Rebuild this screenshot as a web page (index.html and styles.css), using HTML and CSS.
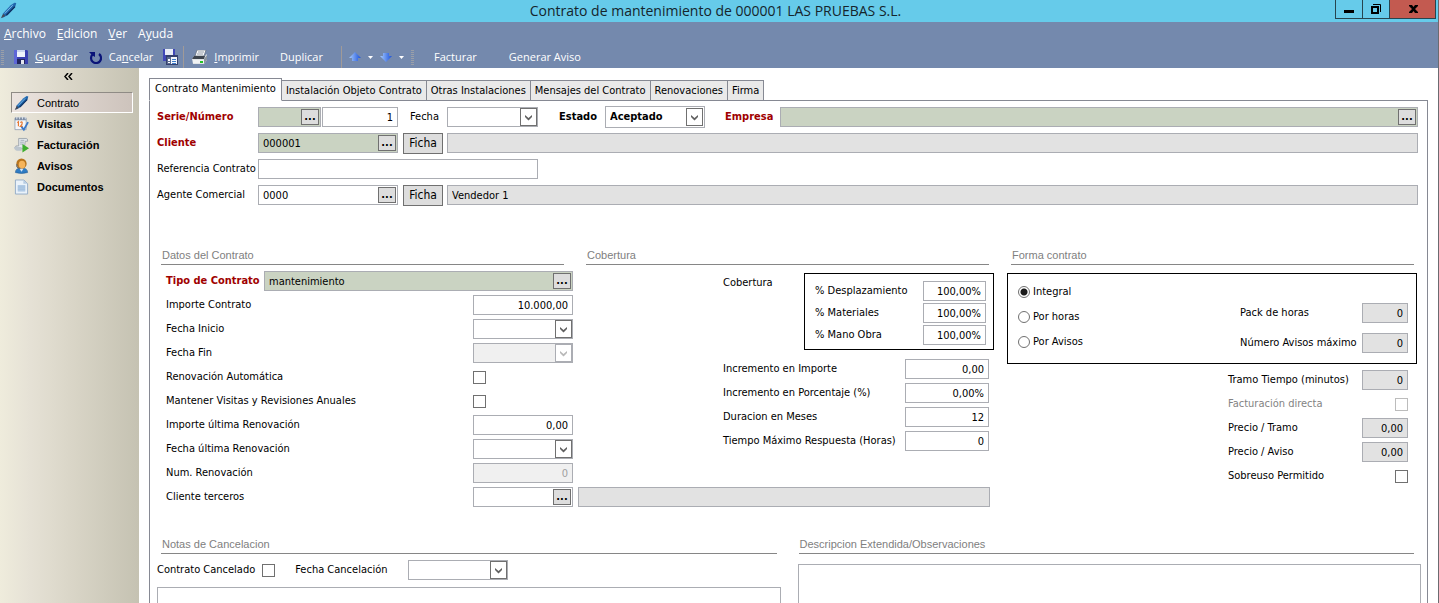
FILE: index.html
```html
<!DOCTYPE html>
<html lang="es">
<head>
<meta charset="utf-8">
<title>Contrato de mantenimiento</title>
<link rel="stylesheet" href="styles.css">
</head>
<body>
<svg class="defs" width="0" height="0" aria-hidden="true">
  <defs>
    <linearGradient id="pen-ink" x1="0" y1="0" x2="1" y2="1">
      <stop offset="0" stop-color="#5aa4e0"/><stop offset=".5" stop-color="#1f66ac"/><stop offset="1" stop-color="#0b2c5c"/>
    </linearGradient>
    <linearGradient id="arrow-blue" x1="0" y1="0" x2="1" y2="0">
      <stop offset="0" stop-color="#a8ccff"/><stop offset="1" stop-color="#1a50d8"/>
    </linearGradient>
    <symbol id="pen" viewBox="0 0 16 16">
      <path d="M1.500 14.800 3 10.500 10 3 13.500.6l1.800.4-1 3.500L7.500 12l-4 2.300z" fill="url(#pen-ink)"/>
      <path d="M.8 15.400 3 11l2 2.200z" fill="#4a4a55"/>
      <path d="M4.500 10.800 12 3" stroke="#8cc4f0" stroke-width=".8"/>
      <path d="M6 12.500 14 4.500" stroke="#0f2f60" stroke-width="1.200"/>
    </symbol>
    <symbol id="chevron" viewBox="0 0 9 7">
      <path d="M1 1v2l3.500 3.500L8 3V1L4.500 4z" fill="currentColor"/>
    </symbol>
  </defs>
</svg>

<header class="titlebar">
  <svg class="titlebar-icon"><use href="#pen"/></svg>
  <h1 class="title">Contrato de mantenimiento de 000001 LAS PRUEBAS S.L.</h1>
  <div class="window-buttons">
    <button class="win-btn" aria-label="Minimizar"><svg width="12" height="12"><path d="M1 7h10v3H1z"/></svg></button>
    <button class="win-btn" aria-label="Restaurar"><svg width="12" height="12"><path d="M1 3h8v8H1zM3 5v4h4V5z" fill-rule="evenodd"/><path d="M3 1.500h7.500V9" fill="none" stroke="#000"/></svg></button>
    <button class="win-btn close" aria-label="Cerrar"><svg width="12" height="12"><path d="M2 2h3l1.500 2L8 2h3v1L8 6l3 3v1H8L6.500 8 5 10H2V9l3-3-3-3z"/></svg></button>
  </div>
</header>

<nav class="menubar">
  <button><u>A</u>rchivo</button>
  <button><u>E</u>dicion</button>
  <button><u>V</u>er</button>
  <button>A<u>y</u>uda</button>
</nav>

<div class="toolbar">
  <span class="grip"></span>
  <button class="tool tool-save">
    <svg width="14" height="14"><path d="M0 0h13l1 1v13H0z" fill="#3a3fb0"/><path d="M0 0h3v14H0z" fill="#5d66d8"/><path d="M3 0h8v7H3z" fill="#eef2fb"/><path d="M3 0h8v2H3z" fill="#c9d4ee"/><path d="M3 9h8v5H3z" fill="#23265e"/><path d="M7 10h3v4H7z" fill="#e4e6ee"/></svg>
    <span><u>G</u>uardar</span>
  </button>
  <button class="tool tool-cancel">
    <svg width="13" height="13"><path d="M3.500 3.500A5 5 0 1 0 10 3" fill="none" stroke="#0a1478" stroke-width="2.200"/><path d="M0 1h6v5L3.500 4.500z" fill="#0a1478"/></svg>
    <span>Ca<u>n</u>celar</span>
  </button>
  <button class="tool tool-list" aria-label="Guardar y cerrar">
    <svg width="16" height="16"><path d="M1 0h12v12H1z" fill="#4048b8"/><path d="M3 0h8v6H3z" fill="#e8edf8"/><path d="M4 6h12v10H4z" fill="#34406e"/><path d="M5 8h10v7H5z" fill="#f4f7fc"/><path d="M5 8h4v7H5z" fill="#5a6a92"/><path d="M6 10h2v2H6zM6 13h2v1H6z" fill="#fff"/><path d="M10 10h4M10 12h4M10 14h4" stroke="#3d7ac8" shape-rendering="crispEdges"/></svg>
  </button>
  <span class="divider"></span>
  <button class="tool tool-print">
    <svg width="16" height="14"><path d="M5 0h9l-2 6H3z" fill="#f7f9fb" stroke="#5f6a78" stroke-width=".7"/><path d="M6 2h6M5 4h6" stroke="#7b8796" stroke-width=".8"/><path d="M2 6h11l2-2v6l-3 4H1L0 9z" fill="#dfe3e6"/><path d="M2 6h11l-1 3H0z" fill="#3c444e"/><path d="M1 10h11v3H1z" fill="#f0f2f3"/><path d="M12 9l3-4v5l-3 4z" fill="#8a949f"/><path d="M8 11h3v2H8z" fill="#24c324"/></svg>
    <span><u>I</u>mprimir</span>
  </button>
  <button class="tool tool-copy">Duplicar</button>
  <span class="divider"></span>
  <button class="tool tool-arrow" aria-label="Anterior">
    <svg width="12" height="10"><path d="M6 0l6 6H9v3H3V6H0z" fill="url(#arrow-blue)"/></svg>
    <svg width="5" height="3"><path d="M0 0h5L2.500 3z" fill="#fff"/></svg>
  </button>
  <button class="tool tool-arrow" aria-label="Siguiente">
    <svg width="12" height="10"><path d="M6 10L0 4h3V1h6v3h3z" fill="url(#arrow-blue)"/></svg>
    <svg width="5" height="3"><path d="M0 0h5L2.500 3z" fill="#fff"/></svg>
  </button>
  <span class="grip"></span>
  <button class="tool tool-invoice">Facturar</button>
  <button class="tool tool-notice">Generar Aviso</button>
</div>

<div class="workspace">
  <aside class="sidebar">
    <button class="collapse" aria-label="Contraer"><svg width="9" height="7"><path d="M4 0L1 3.500 4 7M8 0L5 3.500 8 7" fill="none" stroke="#000" stroke-width="1.500"/></svg></button>
    <nav class="side-nav">
      <a href="#" class="side-link current"><svg><use href="#pen"/></svg>Contrato</a>
      <a href="#" class="side-link"><svg viewBox="0 0 16 16"><path d="M1 2h12v12H1z" fill="#f4f6fa" stroke="#8a98ae" stroke-width=".8"/><path d="M1 1h12v3H1z" fill="#7c8ca4"/><path d="M3 0v3M6 0v3M9 0v3M12 0v3" stroke="#dfe5ee"/><path d="M3.500 6.500l1.200-1v5M6.800 6.500q1.600-1.500 2 0T6.800 10.500h2.500" fill="none" stroke="#e8762c" stroke-width="1.200"/><path d="M8 11l2.500 3L15 6" fill="none" stroke="#3c78c8" stroke-width="2"/></svg>Visitas</a>
      <a href="#" class="side-link"><svg viewBox="0 0 16 16"><path d="M5 1h8q2 0 1.500 3H12l-1 8H3q-2-1-1-3h3z" fill="#e3e8ec" stroke="#8d97a2" stroke-width=".8"/><path d="M7 3h4M6.500 5h4M6.500 7h4" stroke="#a4afba"/><path d="M0 10h8v4H3q-3-1-3-4z" fill="#bcc5cd"/><path d="M9 7l7 4.500L9 16z" fill="#3fae2f"/></svg>Facturación</a>
      <a href="#" class="side-link"><svg viewBox="0 0 16 16"><path d="M1.500 15q0-5 6.500-5t6.500 5q-6.500 2-13 0z" fill="#2f7cc4" stroke="#1b5590" stroke-width=".6"/><ellipse cx="8" cy="5.500" rx="5.500" ry="5.500" fill="#b8741c"/><ellipse cx="8.500" cy="6.500" rx="3.500" ry="4.200" fill="#f6b45a"/><path d="M3 6v3q2 2 4 1.500" fill="none" stroke="#58606c"/><path d="M6 11h4l-2 3z" fill="#d8e8f6"/></svg>Avisos</a>
      <a href="#" class="side-link"><svg viewBox="0 0 16 16"><path d="M1.500.500h9l4 4v11h-13z" fill="#eaf2fa" stroke="#93abc6"/><path d="M10 .500v4h4z" fill="#b5cbe2"/><path d="M4 6h8v7H4z" fill="#b9d0e8"/><path d="M4 7h8M4 9h8M4 11h8" stroke="#9dbbdc"/></svg>Documentos</a>
    </nav>
  </aside>

  <main class="content">
    <div class="tabs" role="tablist">
      <button role="tab" class="tab active" aria-selected="true">Contrato Mantenimiento</button>
      <button role="tab" class="tab">Instalación Objeto Contrato</button>
      <button role="tab" class="tab">Otras Instalaciones</button>
      <button role="tab" class="tab">Mensajes del Contrato</button>
      <button role="tab" class="tab">Renovaciones</button>
      <button role="tab" class="tab">Firma</button>
    </div>

    <form class="panel">
      <div class="head">
        <div class="head-row">
          <label class="head-label required" for="serie">Serie/Número</label>
          <div class="field key serie"><input id="serie" type="text"><button type="button" class="more" aria-label="Buscar serie">...</button></div>
          <div class="field numero"><input class="num" type="text" value="1" aria-label="Número"></div>
          <label class="fecha-label" for="fecha">Fecha</label>
          <div class="field fecha"><input id="fecha" type="text"><button type="button" class="drop" aria-label="Abrir calendario"><svg><use href="#chevron"/></svg></button></div>
          <label class="estado-label" for="estado">Estado</label>
          <div class="field estado"><select id="estado"><option>Aceptado</option></select><span class="drop"><svg><use href="#chevron"/></svg></span></div>
          <label class="empresa-label required" for="empresa">Empresa</label>
          <div class="field key grow"><input id="empresa" type="text"><button type="button" class="more" aria-label="Buscar empresa">...</button></div>
        </div>
        <div class="head-row">
          <label class="head-label required" for="cliente">Cliente</label>
          <div class="field key code"><input id="cliente" type="text" value="000001"><button type="button" class="more" aria-label="Buscar cliente">...</button></div>
          <button type="button" class="ficha">Ficha</button>
          <div class="field locked grow"><input type="text" readonly aria-label="Nombre del cliente"></div>
        </div>
        <div class="head-row">
          <label class="head-label" for="referencia">Referencia Contrato</label>
          <div class="field referencia"><input id="referencia" type="text"></div>
        </div>
        <div class="head-row">
          <label class="head-label" for="agente">Agente Comercial</label>
          <div class="field code"><input id="agente" type="text" value="0000"><button type="button" class="more" aria-label="Buscar agente">...</button></div>
          <button type="button" class="ficha">Ficha</button>
          <div class="field locked grow"><input type="text" value="Vendedor 1" readonly aria-label="Nombre del agente"></div>
        </div>
      </div>

      <div class="sections">
        <section class="section datos">
          <h2 class="heading">Datos del Contrato</h2>
          <div class="row"><label class="required tipo-label" for="tipo">Tipo de Contrato</label><div class="field key grow"><input id="tipo" type="text" value="mantenimiento"><button type="button" class="more" aria-label="Buscar tipo">...</button></div></div>
          <div class="row"><label for="importe">Importe Contrato</label><div class="field"><input id="importe" class="num" type="text" value="10.000,00"></div></div>
          <div class="row"><label for="inicio">Fecha Inicio</label><div class="field"><input id="inicio" type="text"><button type="button" class="drop" aria-label="Abrir calendario"><svg><use href="#chevron"/></svg></button></div></div>
          <div class="row"><label for="fin">Fecha Fin</label><div class="field off"><input id="fin" type="text" disabled><button type="button" class="drop" disabled aria-label="Abrir calendario"><svg><use href="#chevron"/></svg></button></div></div>
          <div class="row"><label for="auto">Renovación Automática</label><div class="check-cell"><input id="auto" type="checkbox"></div></div>
          <div class="row"><label for="mantener">Mantener Visitas y Revisiones Anuales</label><div class="check-cell"><input id="mantener" type="checkbox"></div></div>
          <div class="row"><label for="importe-ult">Importe última Renovación</label><div class="field"><input id="importe-ult" class="num" type="text" value="0,00"></div></div>
          <div class="row"><label for="fecha-ult">Fecha última Renovación</label><div class="field"><input id="fecha-ult" type="text"><button type="button" class="drop" aria-label="Abrir calendario"><svg><use href="#chevron"/></svg></button></div></div>
          <div class="row"><label for="num-ren">Num. Renovación</label><div class="field off"><input id="num-ren" class="num" type="text" value="0" disabled></div></div>
        </section>

        <section class="section cobertura">
          <h2 class="heading">Cobertura</h2>
          <div class="cobertura-body">
            <div class="cobertura-top">
              <span>Cobertura</span>
              <div class="box percent-box">
                <div class="row"><label for="desp">% Desplazamiento</label><div class="field"><input id="desp" class="num" type="text" value="100,00%"></div></div>
                <div class="row"><label for="mat">% Materiales</label><div class="field"><input id="mat" class="num" type="text" value="100,00%"></div></div>
                <div class="row"><label for="mano">% Mano Obra</label><div class="field"><input id="mano" class="num" type="text" value="100,00%"></div></div>
              </div>
            </div>
            <div class="cobertura-rows">
              <div class="row"><label for="inc-imp">Incremento en Importe</label><div class="field"><input id="inc-imp" class="num" type="text" value="0,00"></div></div>
              <div class="row"><label for="inc-por">Incremento en Porcentaje (%)</label><div class="field"><input id="inc-por" class="num" type="text" value="0,00%"></div></div>
              <div class="row"><label for="duracion">Duracion en Meses</label><div class="field"><input id="duracion" class="num" type="text" value="12"></div></div>
              <div class="row"><label for="tiempo">Tiempo Máximo Respuesta (Horas)</label><div class="field"><input id="tiempo" class="num" type="text" value="0"></div></div>
            </div>
          </div>
        </section>

        <section class="section forma">
          <h2 class="heading">Forma contrato</h2>
          <div class="box forma-box">
            <div class="radios">
              <label><input type="radio" name="forma" checked>Integral</label>
              <label><input type="radio" name="forma">Por horas</label>
              <label><input type="radio" name="forma">Por Avisos</label>
            </div>
            <div class="forma-limits">
              <div class="row"><label for="pack">Pack de horas</label><div class="field locked"><input id="pack" class="num" type="text" value="0" readonly></div></div>
              <div class="row"><label for="max">Número Avisos máximo</label><div class="field locked"><input id="max" class="num" type="text" value="0" readonly></div></div>
            </div>
          </div>
          <div class="forma-rows">
            <div class="row"><label for="tramo">Tramo Tiempo (minutos)</label><div class="field locked"><input id="tramo" class="num" type="text" value="0" readonly></div></div>
            <div class="row"><label class="muted" for="directa">Facturación directa</label><input id="directa" type="checkbox" disabled></div>
            <div class="row"><label for="p-tramo">Precio / Tramo</label><div class="field locked"><input id="p-tramo" class="num" type="text" value="0,00" readonly></div></div>
            <div class="row"><label for="p-aviso">Precio / Aviso</label><div class="field locked"><input id="p-aviso" class="num" type="text" value="0,00" readonly></div></div>
            <div class="row"><label for="sobreuso">Sobreuso Permitido</label><input id="sobreuso" type="checkbox"></div>
          </div>
        </section>

        <div class="terceros">
          <div class="row"><label for="terceros">Cliente terceros</label><div class="field"><input id="terceros" type="text"><button type="button" class="more" aria-label="Buscar cliente terceros">...</button></div></div>
          <div class="field locked"><input type="text" readonly aria-label="Nombre del cliente terceros"></div>
        </div>
      </div>

      <div class="notes">
        <section class="note">
          <h2 class="heading">Notas de Cancelacion</h2>
          <div class="cancel-row">
            <label for="cancelado">Contrato Cancelado</label><input id="cancelado" type="checkbox">
            <label class="cancel-date-label" for="fecha-cancel">Fecha Cancelación</label>
            <div class="field"><input id="fecha-cancel" type="text"><button type="button" class="drop" aria-label="Abrir calendario"><svg><use href="#chevron"/></svg></button></div>
          </div>
          <textarea aria-label="Notas de Cancelacion"></textarea>
        </section>
        <section class="note">
          <h2 class="heading">Descripcion Extendida/Observaciones</h2>
          <textarea aria-label="Descripcion Extendida"></textarea>
        </section>
      </div>
    </form>
  </main>
</div>
</body>
</html>
```
FILE: styles.css
```css
* { box-sizing: border-box; }

html, body { height: 100%; }

body {
  margin: 0;
  display: flex;
  flex-direction: column;
  overflow: hidden;
  border-right: 1px solid #6b6b70;
  background: #fff;
  color: #000;
  font: 11px/16px "DejaVu Sans Condensed", "DejaVu Sans", sans-serif;
}

.defs { position: absolute; }

button, input, select, textarea { font: inherit; color: inherit; }
button { border: 0; padding: 0; background: none; }

/* Window frame */
.titlebar {
  display: grid;
  grid-template-columns: 100px 1fr 107px;
  height: 22px;
  background: #66cbea;
}
.titlebar-icon { width: 17px; height: 17px; margin-top: 2px; }
.title {
  margin: 0;
  text-align: center;
  font: 14px/22px "Open Sans", "Noto Sans", sans-serif;
  color: #15252c;
}
.window-buttons {
  display: flex;
  justify-content: flex-end;
  height: 19px;
  padding-right: 2px;
}
.win-btn {
  display: flex;
  align-items: center;
  justify-content: center;
  width: 27px;
  border: 1px solid #27454f;
  border-top: 0;
  border-right: 0;
}
.win-btn.close {
  width: 47px;
  border-right: 1px solid #27454f;
  background: #c35a50;
}

.menubar, .toolbar {
  display: flex;
  align-items: center;
  background: #7489ad;
  color: #fff;
  font-family: "Open Sans", "Noto Sans", sans-serif;
}
.menubar { height: 24px; gap: 11px; padding-left: 4px; font-size: 12px; }
.toolbar { height: 22px; }
.tool { display: flex; align-items: center; }
.tool-save { gap: 7px; margin-left: 10px; }
.tool-cancel { gap: 7px; margin-left: 11px; }
.tool-list { margin-left: 9px; }
.tool-print { gap: 6px; margin-left: 8px; }
.tool-copy { margin-left: 21px; margin-right: 13px; }
.tool-arrow { gap: 7px; margin-left: 7px; }
.tool-arrow + .grip { margin-left: 7px; }
.tool-invoice { margin-left: 20px; }
.tool-notice { margin-left: 32px; }
.grip {
  width: 3px;
  height: 15px;
  margin-left: 1px;
  background: repeating-linear-gradient(#9a9fa8 0 1px, transparent 1px 2px);
}
.divider { width: 1px; height: 22px; margin-left: 5px; background: #a09a98; }

.workspace { flex: 1; display: flex; min-height: 0; }

/* Side navigation */
.sidebar {
  flex: none;
  width: 139px;
  background: linear-gradient(90deg, #efecdc, #e6e2d6 20%, #dad6c8 50%, #c5c2b2);
}
.collapse { display: flex; margin: 5px 0 0 64px; }
.side-nav { margin: 12px 6px 0 11px; }
.side-link {
  display: flex;
  align-items: center;
  gap: 8px;
  height: 21px;
  padding-left: 3px;
  font: bold 11px/16px "Liberation Sans", Arial, sans-serif;
  color: #000;
  text-decoration: none;
}
.side-link svg { width: 15px; height: 16px; }
.side-link.current {
  padding-left: 2px;
  border: 1px solid;
  border-color: #8f8b85 #fff #fff #8f8b85;
  background: linear-gradient(90deg, #ece4df, #cdc3bc);
  font-weight: normal;
}

/* Tabs */
.content { flex: 1; display: flex; flex-direction: column; min-width: 0; padding: 10px 10px 0; }
.tabs { display: flex; align-items: flex-end; height: 23px; }
.tab {
  height: 21px;
  padding: 0 4px;
  border: 1px solid #868993;
  border-left-width: 0;
  background: #e9e9e9;
  white-space: nowrap;
}
.tab.active {
  z-index: 1;
  height: 23px;
  padding: 0 5px 2px;
  border-left-width: 1px;
  border-bottom-color: #fff;
  background: #fff;
}
.panel {
  flex: 1;
  display: flex;
  flex-direction: column;
  min-height: 0;
  margin: -1px 0 0;
  padding: 3px 6px 0 7px;
  border: 1px solid #868993;
  border-bottom: 0;
}

/* Fields */
.field {
  display: flex;
  align-items: center;
  height: 20px;
  border: 1px solid #abadb3;
  background: #fff;
}
.field input {
  flex: 1;
  min-width: 0;
  width: 0;
  height: 18px;
  padding: 0 4px;
  border: 0;
  outline: 0;
  background: none;
}
.field .num { text-align: right; }
.field.key { background: #cad3c2; }
.field.locked { background: #e2e2e2; }
.field.off { background: #f0f0f0; color: #a0a0a0; }
.grow { flex: 1; }

.more {
  width: 18px;
  height: 16px;
  margin-right: 1px;
  border: 1px solid #707070;
  background: #ddd;
  font-weight: bold;
  line-height: 12px;
}
.drop {
  display: flex;
  align-items: center;
  justify-content: center;
  width: 17px;
  height: 18px;
  border: 1px solid #707070;
  background: #fff;
  color: #606060;
}
.drop svg { width: 9px; height: 7px; }
.off .drop { border-color: #abadb3; color: #b8b8b8; }

.ficha {
  width: 40px;
  height: 21px;
  margin: 0 4px 0 5px;
  border: 1px solid #707070;
  background: #ddd;
  font-size: 12px;
}
.required { color: #a00000; font-weight: bold; }
.muted { color: #838383; }

input[type="checkbox"] {
  appearance: none;
  width: 13px;
  height: 13px;
  margin: 0;
  border: 1px solid #707070;
  background: #fff;
}
input[type="checkbox"]:disabled { border-color: #bcbcbc; }
input[type="radio"] {
  appearance: none;
  width: 12px;
  height: 12px;
  margin: 0;
  border: 1px solid #707070;
  border-radius: 50%;
  background: #fff;
}
input[type="radio"]:checked { background: radial-gradient(circle, #1a1a1a 3px, #fff 4px); }

/* Contract header */
.head-row { display: flex; align-items: center; height: 26px; padding-right: 3px; }
.head-label { width: 101px; white-space: nowrap; }
.serie { width: 63px; }
.numero { width: 76px; margin-left: 1px; }
.fecha-label { width: 37px; margin-left: 12px; }
.fecha { width: 91px; }
.estado-label { width: 46px; margin-left: 21px; font-weight: bold; }
.estado { position: relative; width: 100px; height: 22px; font-weight: bold; }
.estado select {
  width: 100%;
  height: 20px;
  padding: 0 20px 0 4px;
  border: 0;
  appearance: none;
  background: none;
}
.estado .drop { position: absolute; right: 1px; top: 1px; pointer-events: none; }
.empresa-label { width: 55px; margin-left: 20px; }
.code { width: 140px; }
.referencia { width: 280px; }

/* Three-column sections */
.sections {
  display: grid;
  grid-template-columns: 412fr 408fr 410fr;
  grid-template-rows: auto 24px auto;
  column-gap: 13px;
  margin: 40px 4px 0;
}
.forma { grid-column: 3; grid-row: 1 / 4; }
.terceros {
  grid-column: 1 / 3;
  grid-row: 2;
  display: grid;
  grid-template-columns: 412fr 412fr;
  column-gap: 5px;
  align-items: center;
  padding-right: 4px;
}
.heading {
  margin: 0 0 4px;
  padding: 0 1px 1px;
  border-bottom: 1px solid #868686;
  font: 11px/15px "Liberation Sans", Arial, sans-serif;
  color: #808080;
}
.datos .heading { margin-right: 9px; }
.cobertura .heading { margin-right: 5px; }
.forma .heading { margin: 0 3px 8px 4px; }

.row { display: flex; align-items: center; justify-content: space-between; height: 24px; white-space: nowrap; }
.datos .row, .terceros .row { padding-left: 5px; }
.datos .field:not(.grow), .terceros .row .field, .check-cell { width: 100px; }
.check-cell { display: flex; }
.tipo-label { width: 98px; }

.box { border: 1px solid #000; }
.cobertura-body { padding-top: 4px; }
.cobertura-top { display: flex; justify-content: space-between; padding-left: 137px; }
.cobertura-top > span { padding-top: 2px; }
.percent-box { width: 190px; padding: 6px 7px 3px 10px; }
.percent-box .row { height: 22px; }
.percent-box .field { width: 63px; }
.cobertura-rows { padding: 7px 5px 0 137px; }
.cobertura-rows .field { width: 84px; }

.forma-box { display: flex; justify-content: space-between; padding: 5px 8px 5px 10px; }
.radios label { display: flex; align-items: center; gap: 3px; height: 25px; }
.forma-limits { width: 168px; padding-top: 19px; }
.forma-limits .row { height: 30px; }
.forma-limits .field, .forma-rows .field { width: 46px; }
.forma-rows { width: 189px; margin: 4px 0 0 auto; padding-right: 9px; }

/* Notes */
.notes { flex: 1; display: grid; grid-template-columns: 1fr 1fr; column-gap: 17px; min-height: 0; margin-top: 28px; }
.note { display: flex; flex-direction: column; min-height: 0; }
.note .heading { margin: 0 4px 4px; }
.note + .note .heading { margin: 0 7px 10px 1px; }
.cancel-row { display: flex; align-items: center; height: 24px; margin-bottom: 5px; }
.cancel-row input[type="checkbox"] { margin-left: 7px; }
.cancel-date-label { width: 113px; margin-left: 20px; }
.cancel-row .field { width: 100px; }
textarea {
  flex: 1;
  width: 100%;
  min-height: 0;
  padding: 0 4px;
  border: 1px solid #abadb3;
  border-bottom: 0;
  outline: 0;
  resize: none;
  background: #fff;
}
```
